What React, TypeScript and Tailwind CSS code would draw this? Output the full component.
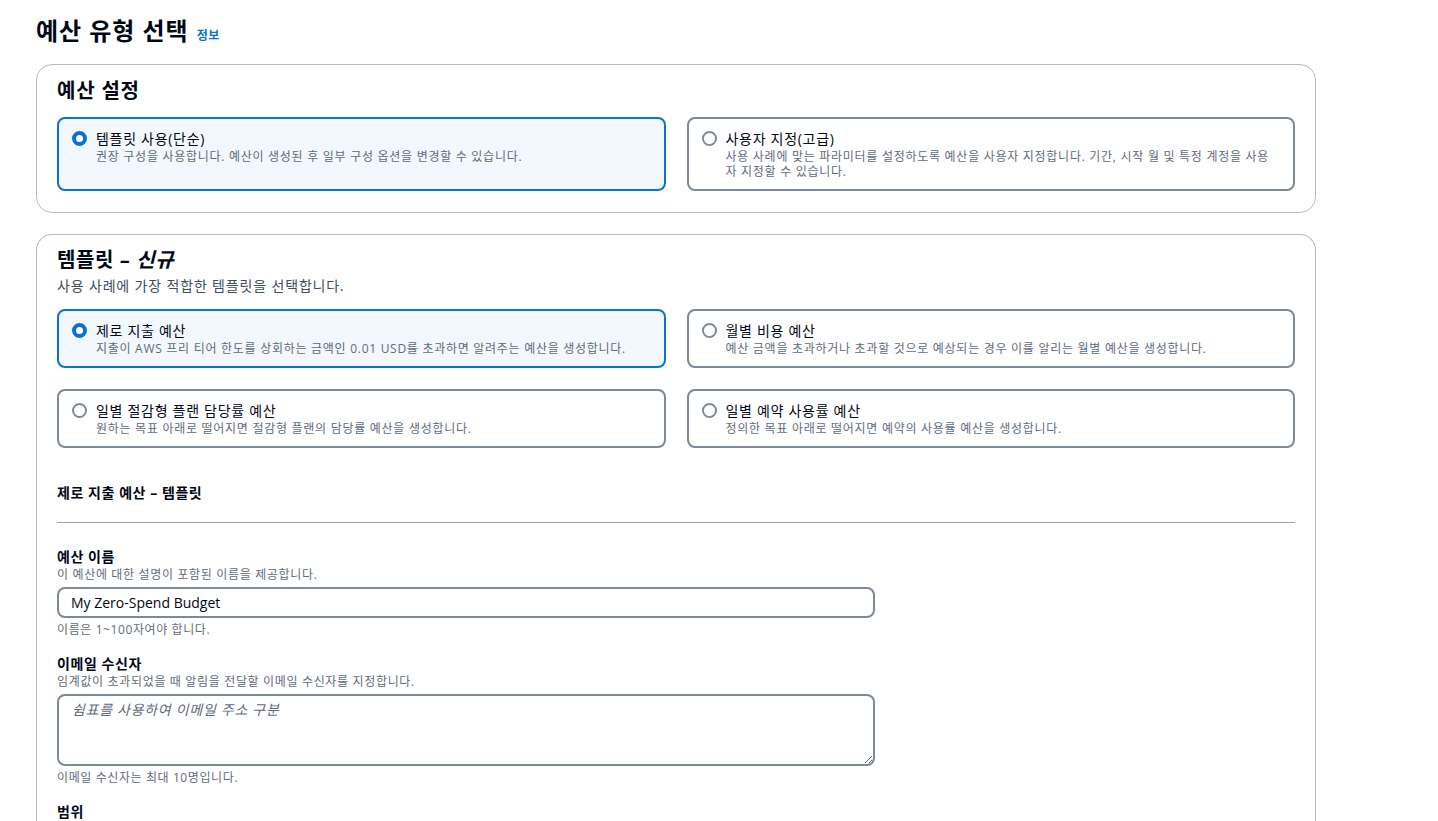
import React from "react";

const font = {
  fontFamily: '"Open Sans", "Noto Sans CJK KR", sans-serif',
};

interface TileProps {
  label: string;
  desc: string;
  selected?: boolean;
}

function Tile({ label, desc, selected }: TileProps) {
  return (
    <div
      className={
        selected
          ? "flex gap-[9px] rounded-lg border-2 border-[#0972d3] bg-[#f2f8fd] px-[13px] py-[10px]"
          : "flex gap-[9px] rounded-lg border-2 border-[#7d8998] bg-white px-[13px] py-[10px]"
      }
    >
      <div className="pt-[2px]">
        {selected ? (
          <div className="h-[15px] w-[15px] rounded-full border-[4px] border-[#0972d3] bg-white" />
        ) : (
          <div className="h-[15px] w-[15px] rounded-full border-2 border-[#7d8998] bg-white" />
        )}
      </div>
      <div className="flex flex-col">
        <span className="text-[14px] leading-[20px] tracking-[0.05em] text-[#000716]">{label}</span>
        <span className="break-all text-[12px] leading-[15px] tracking-[0.06em] text-[#5f6b7a]">
          {desc}
        </span>
      </div>
    </div>
  );
}

function Field({
  label,
  desc,
  hint,
  children,
}: {
  label: string;
  desc: string;
  hint?: string;
  children: React.ReactNode;
}) {
  return (
    <div className="flex flex-col">
      <span className="text-[14px] font-bold leading-[20px] tracking-[0.04em] text-[#000716]">{label}</span>
      <span className="text-[12px] leading-[16px] tracking-[0.055em] text-[#5f6b7a]">{desc}</span>
      <div className="mt-[4px] w-[818px]">{children}</div>
      {hint && (
        <span className="mt-[4px] text-[12px] leading-[16px] tracking-[0.05em] text-[#5f6b7a]">
          {hint}
        </span>
      )}
    </div>
  );
}

export default function App() {
  return (
    <div style={font} className="min-h-screen bg-white pl-[36px] pt-[16px] text-[#000716]">
      <div className="flex items-baseline gap-[8px]">
        <h1 className="text-[24px] font-bold leading-[30px] tracking-[0.04em]">예산 유형 선택</h1>
        <a className="text-[12px] font-bold tracking-[0.04em] text-[#0972d3]">정보</a>
      </div>

      <div className="mt-[18px] w-[1280px] rounded-2xl border border-[#b4bbc6] px-[20px] pb-[21px] pt-[12px]">
        <h2 className="text-[20px] font-bold leading-[28px] tracking-[0.04em]">예산 설정</h2>
        <div className="mt-[12px] grid grid-cols-2 gap-[21px]">
          <Tile
            selected
            label="템플릿 사용(단순)"
            desc="권장 구성을 사용합니다. 예산이 생성된 후 일부 구성 옵션을 변경할 수 있습니다."
          />
          <Tile
            label="사용자 지정(고급)"
            desc="사용 사례에 맞는 파라미터를 설정하도록 예산을 사용자 지정합니다. 기간, 시작 월 및 특정 계정을 사용자 지정할 수 있습니다."
          />
        </div>
      </div>

      <div className="mt-[21px] w-[1280px] rounded-t-2xl border border-b-0 border-[#b4bbc6] px-[20px] pb-[40px] pt-[11px]">
        <h2 className="text-[20px] font-bold leading-[28px] tracking-[0.03em]">
          템플릿 – <i>신규</i>
        </h2>
        <p className="mt-[2px] text-[14px] leading-[20px] tracking-[0.06em] text-[#414d5c]">
          사용 사례에 가장 적합한 템플릿을 선택합니다.
        </p>
        <div className="mt-[13px] grid grid-cols-2 gap-[21px]">
          <Tile
            selected
            label="제로 지출 예산"
            desc="지출이 AWS 프리 티어 한도를 상회하는 금액인 0.01 USD를 초과하면 알려주는 예산을 생성합니다."
          />
          <Tile
            label="월별 비용 예산"
            desc="예산 금액을 초과하거나 초과할 것으로 예상되는 경우 이를 알리는 월별 예산을 생성합니다."
          />
          <Tile
            label="일별 절감형 플랜 담당률 예산"
            desc="원하는 목표 아래로 떨어지면 절감형 플랜의 담당률 예산을 생성합니다."
          />
          <Tile
            label="일별 예약 사용률 예산"
            desc="정의한 목표 아래로 떨어지면 예약의 사용률 예산을 생성합니다."
          />
        </div>

        <h3 className="mt-[35px] text-[14px] font-bold leading-[20px] tracking-[0.04em]">
          제로 지출 예산 – 템플릿
        </h3>
        <div className="mt-[19px] border-t border-[#9ba1aa]" />

        <div className="mt-[24px] flex flex-col gap-[16px]">
          <Field
            label="예산 이름"
            desc="이 예산에 대한 설명이 포함된 이름을 제공합니다."
            hint="이름은 1~100자여야 합니다."
          >
            <input
              defaultValue="My Zero-Spend Budget"
              className="h-[31px] w-full rounded-lg border-2 border-[#7d8998] px-[12px] text-[14px] text-[#000716] outline-none"
            />
          </Field>
          <Field
            label="이메일 수신자"
            desc="임계값이 초과되었을 때 알림을 전달할 이메일 수신자를 지정합니다."
            hint="이메일 수신자는 최대 10명입니다."
          >
            <textarea
              placeholder="쉼표를 사용하여 이메일 주소 구분"
              className="block h-[72px] w-full rounded-lg border-2 border-[#7d8998] px-[13px] py-[4px] text-[14px] leading-[20px] tracking-[0.05em] outline-none placeholder:italic placeholder:text-[#5f6b7a]"
            />
          </Field>
          <span className="text-[14px] font-bold leading-[20px] tracking-[0.04em]">범위</span>
        </div>
      </div>
    </div>
  );
}
